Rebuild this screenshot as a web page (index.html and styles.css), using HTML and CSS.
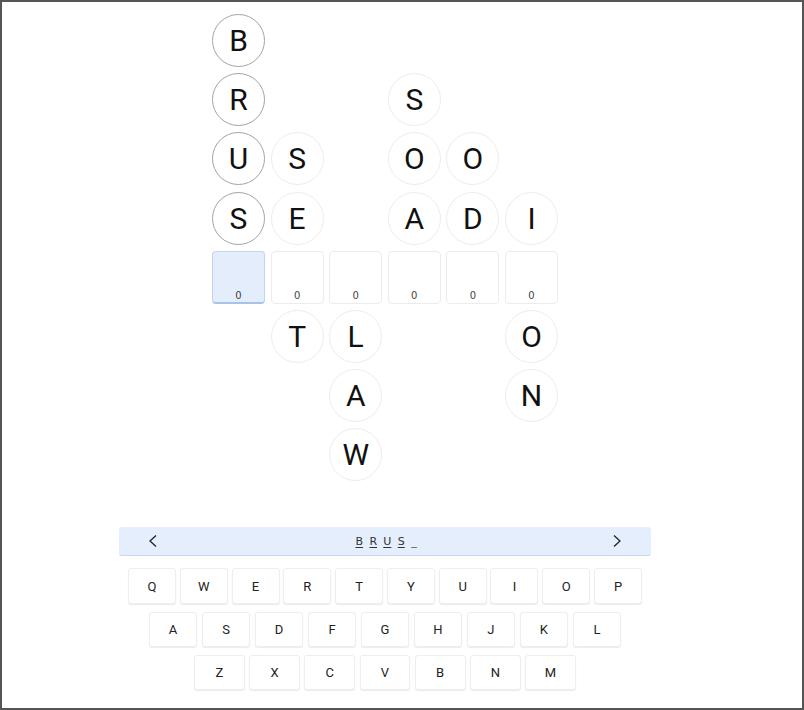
FILE: index.html
```html
<!DOCTYPE html>
<html lang="en">
<head>
    <meta charset="UTF-8">
    <meta name="viewport" content="width=device-width, initial-scale=1.0">
    <title>Word Grid</title>
    <link rel="stylesheet" href="styles.css">
</head>
<body>
    <div class="app">
        <div class="board">
            <!-- row 1 -->
            <div class="cell tile picked">B</div>
            <div class="cell"></div><div class="cell"></div><div class="cell"></div><div class="cell"></div><div class="cell"></div>
            <!-- row 2 -->
            <div class="cell tile picked">R</div>
            <div class="cell"></div><div class="cell"></div>
            <div class="cell tile">S</div>
            <div class="cell"></div><div class="cell"></div>
            <!-- row 3 -->
            <div class="cell tile picked">U</div>
            <div class="cell tile">S</div>
            <div class="cell"></div>
            <div class="cell tile">O</div>
            <div class="cell tile">O</div>
            <div class="cell"></div>
            <!-- row 4 -->
            <div class="cell tile picked">S</div>
            <div class="cell tile">E</div>
            <div class="cell"></div>
            <div class="cell tile">A</div>
            <div class="cell tile">D</div>
            <div class="cell tile">I</div>
            <!-- slots -->
            <div class="cell slot active"><span>0</span></div>
            <div class="cell slot"><span>0</span></div>
            <div class="cell slot"><span>0</span></div>
            <div class="cell slot"><span>0</span></div>
            <div class="cell slot"><span>0</span></div>
            <div class="cell slot"><span>0</span></div>
            <!-- row 6 -->
            <div class="cell"></div>
            <div class="cell tile">T</div>
            <div class="cell tile">L</div>
            <div class="cell"></div><div class="cell"></div>
            <div class="cell tile">O</div>
            <!-- row 7 -->
            <div class="cell"></div><div class="cell"></div>
            <div class="cell tile">A</div>
            <div class="cell"></div><div class="cell"></div>
            <div class="cell tile">N</div>
            <!-- row 8 -->
            <div class="cell"></div><div class="cell"></div>
            <div class="cell tile">W</div>
            <div class="cell"></div><div class="cell"></div><div class="cell"></div>
        </div>

        <div class="clue">
            <button class="arrow">
                <svg width="8" height="12" viewBox="0 0 8 12"><polyline points="7,0.5 1,6 7,11.5" fill="none" stroke="#222" stroke-width="1.3"/></svg>
            </button>
            <div class="word">
                <span class="got">B</span><span class="got">R</span><span class="got">U</span><span class="got">S</span><span class="blank">_</span>
            </div>
            <button class="arrow">
                <svg width="8" height="12" viewBox="0 0 8 12"><polyline points="1,0.5 7,6 1,11.5" fill="none" stroke="#222" stroke-width="1.3"/></svg>
            </button>
        </div>

        <div class="keyboard">
            <div class="keys row-1">
                <button>Q</button><button>W</button><button>E</button><button>R</button><button>T</button>
                <button>Y</button><button>U</button><button>I</button><button>O</button><button>P</button>
            </div>
            <div class="keys row-2">
                <button>A</button><button>S</button><button>D</button><button>F</button><button>G</button>
                <button>H</button><button>J</button><button>K</button><button>L</button>
            </div>
            <div class="keys row-3">
                <button>Z</button><button>X</button><button>C</button><button>V</button>
                <button>B</button><button>N</button><button>M</button>
            </div>
        </div>
    </div>
</body>
</html>
```

FILE: styles.css
```css
html, body {
    height: 100%;
}

body {
    margin: 0;
    box-sizing: border-box;
    border: 2px solid #555;
    background-color: #fff;
    color: #111;
    font-family: Roboto, "Liberation Sans", sans-serif;
}

.app {
    width: 766px;
    display: flex;
    flex-direction: column;
    align-items: center;
    padding-top: 12px;
}

/* Board */
.board {
    display: grid;
    grid-template-columns: repeat(6, 53px);
    grid-auto-rows: 53px;
    column-gap: 5.6px;
    row-gap: 6.2px;
}

.cell {
    box-sizing: border-box;
}

.tile {
    border: 1px solid #ececec;
    border-radius: 50%;
    display: flex;
    align-items: center;
    justify-content: center;
    font-size: 30px;
    color: #111;
}

.tile.picked {
    border-color: #a3a3a3;
}

.slot {
    border: 1px solid #ececec;
    border-radius: 4px;
    display: flex;
    align-items: flex-end;
    justify-content: center;
    padding-bottom: 2px;
    font-family: "DejaVu Sans", sans-serif;
    font-size: 10px;
    color: #444;
}

.slot.active {
    background-color: #e4edfc;
    border-color: #c2d4f2;
    border-bottom: 2px solid #a9c2ea;
    padding-bottom: 1px;
}

/* Clue bar */
.clue {
    margin-top: 46px;
    width: 532px;
    height: 29px;
    box-sizing: border-box;
    background-color: #e5eefc;
    border-bottom: 1px solid #c7d8f3;
    border-radius: 3px;
    display: flex;
    align-items: center;
    justify-content: space-between;
    padding: 0 30px;
}

.arrow {
    background: none;
    border: none;
    padding: 0;
    display: flex;
    align-items: center;
}

.word {
    display: flex;
    gap: 6px;
    font-family: "DejaVu Sans", sans-serif;
    font-size: 11px;
    color: #333;
    margin-left: 2px;
}

.word .got {
    width: 8px;
    text-align: center;
    text-decoration: underline;
    text-underline-offset: 2px;
}

.word .blank {
    color: #555;
}

/* Keyboard */
.keyboard {
    margin-top: 12px;
    display: flex;
    flex-direction: column;
    align-items: center;
    gap: 8px;
}

.keys {
    display: flex;
}

.keys button {
    height: 35px;
    box-sizing: border-box;
    background-color: #fff;
    border: 1px solid #eeeeee;
    border-radius: 3px;
    box-shadow: 0 1px 1px rgba(0, 0, 0, 0.08);
    font-family: Roboto, sans-serif;
    font-size: 13px;
    color: #222;
    padding: 0;
}

.row-1 {
    gap: 3.8px;
}

.row-1 button {
    width: 48px;
    height: 36px;
}

.row-2 {
    gap: 4.7px;
}

.row-2 button {
    width: 48.3px;
}

.row-3 {
    gap: 4.5px;
}

.row-3 button {
    width: 50.7px;
}
```
